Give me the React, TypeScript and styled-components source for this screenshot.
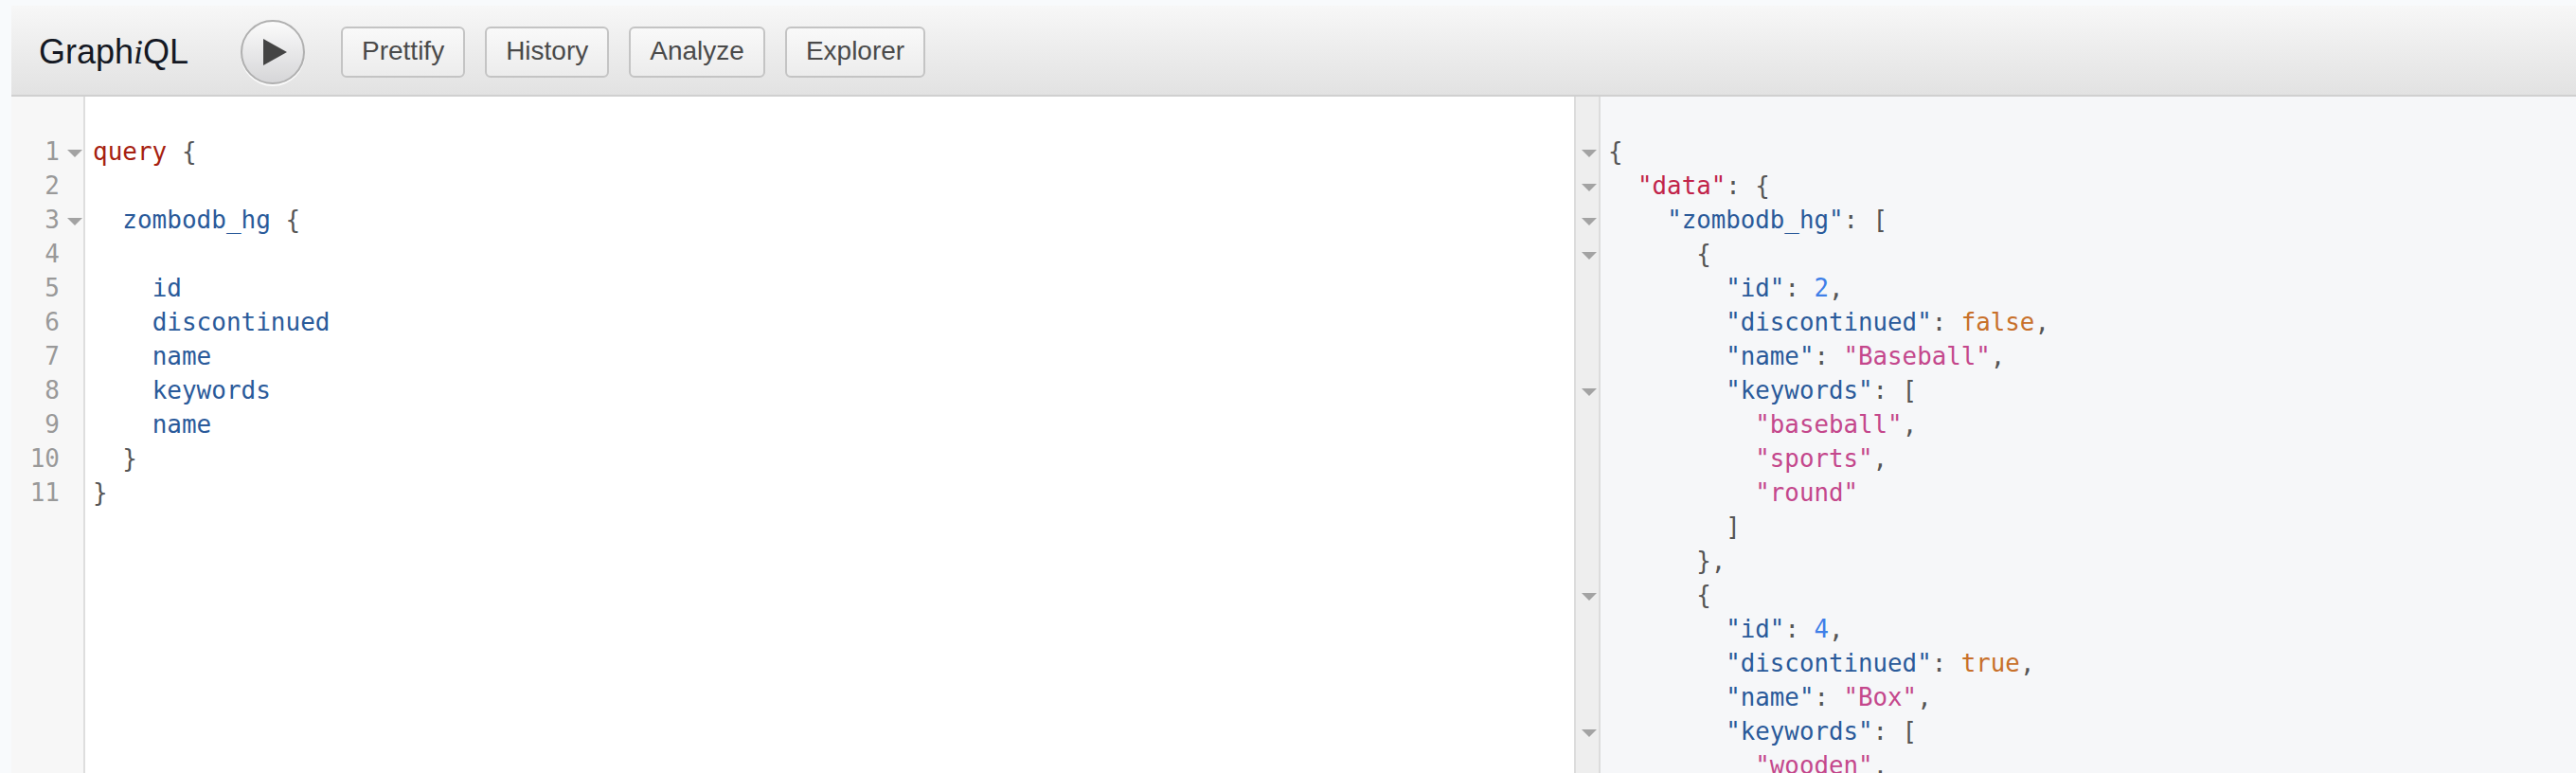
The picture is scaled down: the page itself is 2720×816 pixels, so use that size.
import React from 'react';
import styled, { createGlobalStyle } from 'styled-components';

const GlobalStyle = createGlobalStyle`
  html, body {
    margin: 0;
    height: 100%;
    overflow: hidden;
    background: #f8fafc;
  }
`;

const Page = styled.div`
  display: flex;
  flex-direction: column;
  height: 816px;
  padding: 6px 0 0 12px;
  box-sizing: border-box;
  overflow: hidden;
`;

const Toolbar = styled.div`
  display: flex;
  align-items: center;
  flex: none;
  height: 96px;
  box-sizing: border-box;
  padding: 3px 0 0 29px;
  background: linear-gradient(#f7f7f7, #e2e2e2);
  border-bottom: 2px solid #d0d0d0;
`;

const Logo = styled.div`
  width: 213px;
  font-family: 'Liberation Sans', Arial, sans-serif;
  font-size: 36px;
  color: #141823;
  em {
    font-family: 'Liberation Serif', serif;
    font-style: italic;
  }
`;

const PlayButton = styled.button`
  display: flex;
  align-items: center;
  justify-content: center;
  flex: none;
  width: 68px;
  height: 68px;
  padding: 0 0 0 5px;
  margin: 0 38px 0 0;
  border: 2px solid #b0b0b0;
  border-radius: 50%;
  background: linear-gradient(#fbfbfb, #d6d6d8);
  box-shadow: 0 2px 0 #fafafa;
`;

const ToolButton = styled.button`
  flex: none;
  height: 54px;
  margin-right: 21px;
  padding: 0 20px 2px;
  box-sizing: border-box;
  border: 2px solid #c4c4c4;
  border-radius: 6px;
  background: linear-gradient(#f9f9f9, #ececec);
  font-family: 'Liberation Sans', Arial, sans-serif;
  font-size: 28px;
  color: #4a4a4a;
`;

const Panes = styled.div`
  display: flex;
  flex: 1;
  min-height: 0;
`;

const EditorPane = styled.div`
  display: flex;
  flex: none;
  width: 1650px;
  background: #fff;
`;

const ResultPane = styled.div`
  display: flex;
  flex: 1;
  min-width: 0;
  background: #f6f7f9;
`;

const Gutter = styled.div`
  flex: none;
  width: 78px;
  box-sizing: border-box;
  padding-top: 40px;
  background: #f7f7f7;
  border-right: 2px solid #dedede;
`;

const ResultGutter = styled.div`
  flex: none;
  width: 28px;
  box-sizing: border-box;
  padding-top: 40px;
  background: #eeeeee;
  border-left: 2px solid #dcdcdc;
  border-right: 2px solid #dcdcdc;
`;

const GutterRow = styled.div`
  display: flex;
  align-items: center;
  height: 36px;
`;

const LineNumber = styled.span`
  width: 51px;
  text-align: right;
  font-family: 'DejaVu Sans Mono', monospace;
  font-size: 26px;
  color: #999;
`;

const Fold = styled.span`
  flex: none;
  width: 0;
  height: 0;
  margin-left: 8px;
  margin-top: 4px;
  border-left: 8px solid transparent;
  border-right: 8px solid transparent;
  border-top: 8px solid #a3a3a3;
`;

const ResultFold = styled(Fold)`
  margin-left: 6px;
`;

const Code = styled.div`
  flex: 1;
  min-width: 0;
  padding: 40px 0 0 8px;
  font-family: 'DejaVu Sans Mono', monospace;
  font-size: 26px;
  line-height: 36px;
  color: #555;
  overflow: hidden;
`;

const ResultCode = styled(Code)`
  font-size: 25.8px;
`;

const Line = styled.div`
  height: 36px;
  white-space: pre;
`;

const Keyword = styled.span`color: #a6200f;`;
const Field = styled.span`color: #2a5a9a;`;
const Data = styled.span`color: #c1244a;`;
const Str = styled.span`color: #c4478c;`;
const Num = styled.span`color: #3f7fe8;`;
const Bool = styled.span`color: #c8702a;`;

const foldedQueryLines = [1, 3];
const queryLines = Array.from({ length: 11 }, (_, i) => i + 1);
const resultFolds = [true, true, true, true, false, false, false, true, false, false, false, false, false, true, false, false, false, true, false];

const App = () => {
  return (
    <Page>
      <GlobalStyle />
      <Toolbar>
        <Logo>Graph<em>i</em>QL</Logo>
        <PlayButton>
          <svg width="25" height="28" viewBox="0 0 25 28">
            <path d="M0 0L25 14L0 28Z" fill="#444" />
          </svg>
        </PlayButton>
        <ToolButton>Prettify</ToolButton>
        <ToolButton>History</ToolButton>
        <ToolButton>Analyze</ToolButton>
        <ToolButton>Explorer</ToolButton>
      </Toolbar>
      <Panes>
        <EditorPane>
          <Gutter>
            {queryLines.map(n => (
              <GutterRow key={n}>
                <LineNumber>{n}</LineNumber>
                {foldedQueryLines.includes(n) && <Fold />}
              </GutterRow>
            ))}
          </Gutter>
          <Code>
            <Line><Keyword>query</Keyword>{' {'}</Line>
            <Line />
            <Line>{'  '}<Field>zombodb_hg</Field>{' {'}</Line>
            <Line />
            <Line>{'    '}<Field>id</Field></Line>
            <Line>{'    '}<Field>discontinued</Field></Line>
            <Line>{'    '}<Field>name</Field></Line>
            <Line>{'    '}<Field>keywords</Field></Line>
            <Line>{'    '}<Field>name</Field></Line>
            <Line>{'  }'}</Line>
            <Line>{'}'}</Line>
          </Code>
        </EditorPane>
        <ResultPane>
          <ResultGutter>
            {resultFolds.map((folded, i) => (
              <GutterRow key={i}>{folded && <ResultFold />}</GutterRow>
            ))}
          </ResultGutter>
          <ResultCode>
            <Line>{'{'}</Line>
            <Line>{'  '}<Data>"data"</Data>{': {'}</Line>
            <Line>{'    '}<Field>"zombodb_hg"</Field>{': ['}</Line>
            <Line>{'      {'}</Line>
            <Line>{'        '}<Field>"id"</Field>{': '}<Num>2</Num>,</Line>
            <Line>{'        '}<Field>"discontinued"</Field>{': '}<Bool>false</Bool>,</Line>
            <Line>{'        '}<Field>"name"</Field>{': '}<Str>"Baseball"</Str>,</Line>
            <Line>{'        '}<Field>"keywords"</Field>{': ['}</Line>
            <Line>{'          '}<Str>"baseball"</Str>,</Line>
            <Line>{'          '}<Str>"sports"</Str>,</Line>
            <Line>{'          '}<Str>"round"</Str></Line>
            <Line>{'        ]'}</Line>
            <Line>{'      },'}</Line>
            <Line>{'      {'}</Line>
            <Line>{'        '}<Field>"id"</Field>{': '}<Num>4</Num>,</Line>
            <Line>{'        '}<Field>"discontinued"</Field>{': '}<Bool>true</Bool>,</Line>
            <Line>{'        '}<Field>"name"</Field>{': '}<Str>"Box"</Str>,</Line>
            <Line>{'        '}<Field>"keywords"</Field>{': ['}</Line>
            <Line>{'          '}<Str>"wooden"</Str>,</Line>
          </ResultCode>
        </ResultPane>
      </Panes>
    </Page>
  );
};

export default App;
